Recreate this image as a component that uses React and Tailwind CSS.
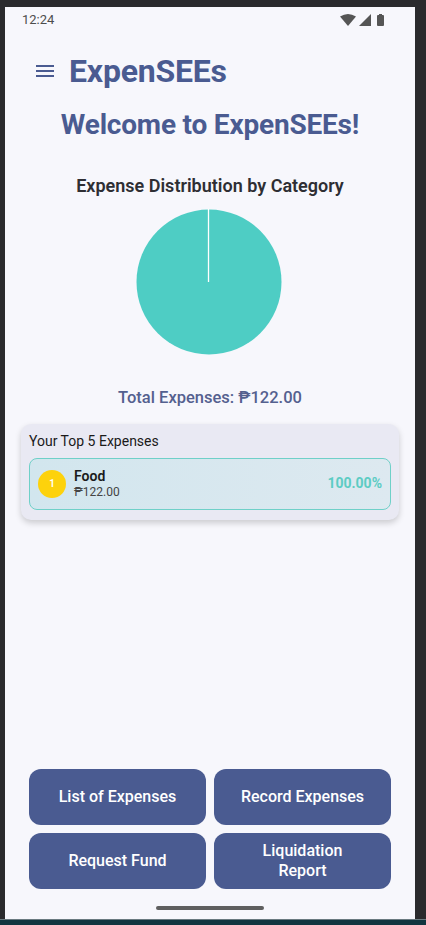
import React from "react";

export default function App() {
  return (
    <div className="w-[426px] h-[925px] bg-[#2a2a2d] flex flex-col overflow-hidden" style={{ fontFamily: "Roboto, 'Noto Sans', sans-serif" }}>
      <div className="ml-[5px] mt-[7px] w-[410px] h-[912px] bg-[#f7f7fc] flex flex-col relative">
        {/* status bar */}
        <div className="h-[24px] flex items-center justify-between pl-[17px] pr-[29px] pt-[1px]">
          <span className="text-[13px] text-[#4d4d4d] leading-none">12:24</span>
          <div className="flex items-center gap-[3px]">
            <svg width="16" height="12" viewBox="0 0 16 12"><path d="M0 2.5 Q8 -2.5 16 2.5 L8 12 Z" fill="#555" /></svg>
            <svg width="12" height="12" viewBox="0 0 12 12"><path d="M12 0 L12 12 L0 12 Z" fill="#555" /></svg>
            <svg width="10" height="12" viewBox="0 0 10 12" className="ml-[2px]"><rect x="1" y="1" width="7" height="11" rx="1" fill="#555" /><rect x="3" y="0" width="3" height="2" fill="#555" /></svg>
          </div>
        </div>
        {/* header */}
        <div className="flex items-center mt-[23px] pl-[31px] h-[34px]">
          <svg width="18" height="14" viewBox="0 0 18 14">
            <rect x="0" y="1" width="18" height="2" fill="#4a5b91" />
            <rect x="0" y="6" width="18" height="2" fill="#4a5b91" />
            <rect x="0" y="11" width="18" height="2" fill="#4a5b91" />
          </svg>
          <span className="ml-[15px] text-[32px] font-bold text-[#4a5b91] leading-none tracking-[-0.2px]">ExpenSEEs</span>
        </div>
        {/* welcome */}
        <div className="mt-[23px] text-center text-[28px] font-bold text-[#4a5b91] leading-none tracking-[-0.2px]">Welcome to ExpenSEEs!</div>
        <div className="mt-[38px] text-center text-[18px] font-semibold text-[#2e2e33] leading-none">Expense Distribution by Category</div>
        {/* pie */}
        <div className="flex justify-center mt-[14px]">
          <svg width="146" height="146" viewBox="0 0 146 146" className="ml-[-2px]">
            <circle cx="73" cy="73" r="72.5" fill="#4ecdc4" />
            <line x1="72.5" y1="0" x2="72.5" y2="73" stroke="#ffffff" strokeWidth="1.3" />
          </svg>
        </div>
        <div className="mt-[35px] text-center text-[16.5px] font-medium text-[#54608f] leading-none">Total Expenses: ₱122.00</div>
        {/* card */}
        <div className="mx-[16px] mt-[17px] rounded-[10px] bg-[#e9e9f3] shadow-[0_3px_6px_rgba(0,0,0,0.18)] px-[8px] pt-[10px] pb-[10px]">
          <div className="text-[14px] text-[#1a1a1a] leading-none">Your Top 5 Expenses</div>
          <div className="mt-[10px] h-[52px] rounded-[8px] border border-[#6fd0c8] bg-gradient-to-r from-[#d2e6ee] to-[#dde9f0] flex items-center pl-[8px] pr-[8px]">
            <div className="w-[28px] h-[28px] rounded-full bg-[#fdd20c] flex items-center justify-center text-white text-[10px] font-semibold">1</div>
            <div className="ml-[8px] flex flex-col">
              <span className="text-[14px] font-semibold text-[#1a1a1a] leading-[17px]">Food</span>
              <span className="text-[12px] text-[#444] leading-[15px]">₱122.00</span>
            </div>
            <div className="flex-1" />
            <span className="text-[14px] font-bold text-[#5cccc4]">100.00%</span>
          </div>
        </div>
        <div className="flex-1" />
        {/* buttons */}
        <div className="grid grid-cols-2 gap-x-[8px] gap-y-[8px] px-[24px]">
          <button className="h-[56px] rounded-[12px] bg-[#4a5b91] text-white text-[16px] font-medium leading-[20px]">List of Expenses</button>
          <button className="h-[56px] rounded-[12px] bg-[#4a5b91] text-white text-[16px] font-medium leading-[20px]">Record Expenses</button>
          <button className="h-[56px] rounded-[12px] bg-[#4a5b91] text-white text-[16px] font-medium leading-[20px]">Request Fund</button>
          <button className="h-[56px] rounded-[12px] bg-[#4a5b91] text-white text-[16px] font-medium leading-[20px] px-[30px]">Liquidation Report</button>
        </div>
        <div className="flex justify-center mt-[17px] mb-[9px]">
          <div className="w-[108px] h-[4px] rounded-full bg-[#5f5f5f]" />
        </div>
      </div>
      <div className="h-[1px] bg-[#6a7a80]" />
      <div className="flex-1 bg-[#123540]" />
    </div>
  );
}
